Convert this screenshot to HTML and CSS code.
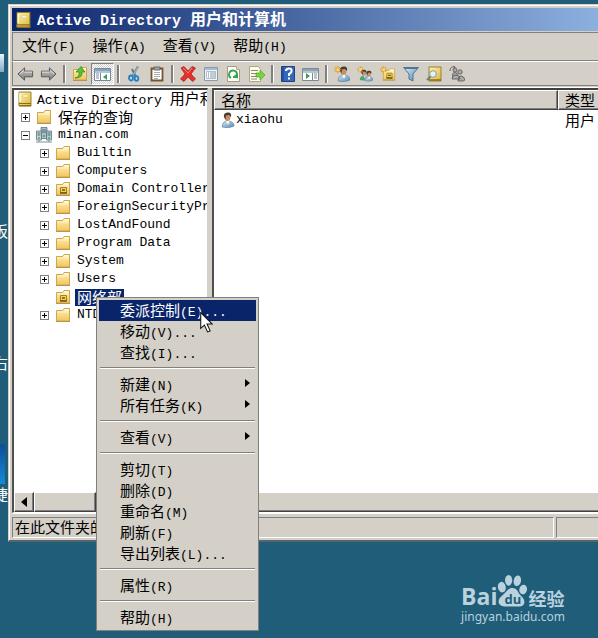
FILE: index.html
```html
<!DOCTYPE html>
<html lang="zh-CN">
<head>
<meta charset="utf-8">
<title>Active Directory 用户和计算机</title>
<link rel="stylesheet" href="styles.css">
</head>
<body>
<svg class="defs" aria-hidden="true">
  <defs>
    <linearGradient id="gold" x2="1" y2="1"><stop offset="0" stop-color="#fdf3b4"/><stop offset="1" stop-color="#dcb63c"/></linearGradient>
    <linearGradient id="fold" x2="0" y2="1"><stop offset="0" stop-color="#fff0b4"/><stop offset="1" stop-color="#f0c55e"/></linearGradient>
    <linearGradient id="steel" x2="0" y2="1"><stop offset="0" stop-color="#c8c8c8"/><stop offset="1" stop-color="#7c7c7c"/></linearGradient>
    <linearGradient id="blue" x2="1" y2="1"><stop offset="0" stop-color="#dcecf8"/><stop offset="1" stop-color="#4f86b4"/></linearGradient>
  </defs>
  <symbol id="book" viewBox="0 0 16 16"><path d="M2 1h12v14H3q-2 0-1-3z" fill="url(#gold)" stroke="#9b8128"/><path d="M2 12.5h12M2 14.6h12" stroke="#8c6c14" stroke-width="1.2"/><path d="M3 2v9" stroke="#fff8cf" stroke-width="1.5"/><path d="M6 4h5v2H6z" fill="#fffbe0" stroke="#d8c06b" stroke-width=".5"/></symbol>
  <symbol id="folder" viewBox="0 0 16 16"><path d="M1.500 3.500h6l1.500-2h5.500v12.500h-13z" fill="url(#fold)" stroke="#d0a64c"/><path d="M9.500 3h4" stroke="#fffbe4" stroke-width="1.500"/><path d="M2 5h12" stroke="#fff5cb"/><path d="M1 14.500h14" stroke="#b99349"/></symbol>
  <symbol id="ou" viewBox="0 0 16 16"><use href="#folder"/><path d="M5.500 6.500h6v5h-6z" fill="#f0d45c" stroke="#a08020"/><path d="M5 12h7M7 9h3" stroke="#6e5713" stroke-width="1.500"/></symbol>
  <symbol id="domain" viewBox="0 0 16 16"><g stroke="#5d747e" stroke-width=".8"><path d="M5 .5h6v11H5z" fill="#a9bdc6"/><path d="M.5 4h5v9h-5z" fill="#c6d5dc"/><path d="M10.500 4h5v9h-5z" fill="#b7c8d0"/></g><path d="M6 3h4M6 5h4M1.500 6h3M1.500 8h3M11.500 6h3M11.500 8h3" stroke="#536c79"/><path d="M7 9h2M2 11h2M12 11h2" stroke="#40b44a" stroke-width="1.500"/><path d="M0 15h16M3 13v2M13 13v2" stroke="#7b929b"/></symbol>
  <symbol id="user" viewBox="0 0 16 16"><path d="M3 15q0-5 4-6h3q5 1 5 5-5 3-12 1z" fill="url(#blue)" stroke="#587b99" stroke-width=".6"/><path d="m7 9 2 4 1.500-4z" fill="#fff"/><ellipse cx="8.500" cy="5" rx="3" ry="4" fill="#c79269"/><path d="M5 5Q4 1 8.500.5T12 5l-2-2-3 .5-.5 4z" fill="#4b3d33"/></symbol>
  <symbol id="spark" viewBox="0 0 16 16"><path d="M4.500 0v9M0 4.500h9M1.500 1.500l6 6M7.500 1.500l-6 6" stroke="#e79b28" stroke-width="1.300"/><circle cx="4.500" cy="4.500" r="1.700" fill="#ffe17c"/></symbol>
  <symbol id="back" viewBox="0 0 18 16"><path d="M1 8 8 1.500V5h8.500v6H8v3.500z" fill="url(#steel)" stroke="#555"/><path d="M3 8 7 4.500M8 6h8" stroke="#e5e5e5" fill="none"/></symbol>
  <symbol id="up" viewBox="0 0 16 16"><use href="#folder"/><path d="M3 12q5-1 4-6H4l5-5.500L13 6h-3q1 6-7 6z" fill="#5bc12f" stroke="#2c8a20" stroke-width=".7"/></symbol>
  <symbol id="panes" viewBox="0 0 17 16"><path d="M.5 2.500h16v12H.5z" fill="#fff" stroke="#7489a1"/><path d="M1 4h15" stroke="#87a3c8" stroke-width="2"/><path d="M1 6h15M6.500 7v7" stroke="#7489a1"/><path d="M2 8h3M2 10h3M2 12h3" stroke="#758ca8"/></symbol>
  <symbol id="cut" viewBox="0 0 16 16"><path d="M12 .5 6.500 10M6 3l4 8" stroke="#60788b" stroke-width="2"/><path d="m12 1-5 8" stroke="#d3e3ec" stroke-width=".7"/><ellipse cx="5" cy="12" rx="2" ry="2.500" fill="none" stroke="#2581c7" stroke-width="1.800"/><ellipse cx="10.500" cy="12.500" rx="1.800" ry="2.300" fill="none" stroke="#2581c7" stroke-width="1.800"/></symbol>
  <symbol id="clip" viewBox="0 0 16 16"><path d="M2.500 2.500h11v12h-11z" fill="#fff" stroke="#765330" stroke-width="1.800"/><path d="M5 1h6v3H5z" fill="#a6a6a6" stroke="#555" stroke-width=".8"/><path d="M5 6.500h6M5 8.500h6M5 10.500h6M5 12.500h4" stroke="#aaa"/></symbol>
  <symbol id="delete" viewBox="0 0 16 16"><path d="m1 2 3-1.500L8 5l4-4.500L15.500 2 11 8l4.500 5-3 2.500L8 11l-4 4.500L.5 13 5 8z" fill="#e5312c" stroke="#a51a1a" stroke-width=".7"/><path d="m3 2 5 5 4-5" fill="none" stroke="#f98074"/></symbol>
  <symbol id="props" viewBox="0 0 16 16"><path d="M1.500 1.500h13v13h-13z" fill="#eef5fa" stroke="#8b9aaa"/><path d="M2 3h12" stroke="#a5bdd6" stroke-width="2"/><path d="M3.500 5.500h9v7h-9z" fill="#fff" stroke="#b3bdc7"/><path d="M5 7h1M5 9h1M5 11h1" stroke="#4c86b3"/><path d="M7 7h5M7 9h5M7 11h5" stroke="#8798a8"/></symbol>
  <symbol id="sheet" viewBox="0 0 16 16"><path d="M1.500.5h9l3 3v12h-12z" fill="#fffffa" stroke="#a49b82"/><path d="M10.500.5v3h3" fill="#eee4c5" stroke="#b8aa84"/></symbol>
  <symbol id="refresh" viewBox="0 0 16 16"><use href="#sheet"/><path d="M5 12A4 4 0 1 1 11 9M11 11H7" fill="none" stroke="#35a252" stroke-width="1.800"/><path d="m8 9 4-1v5z" fill="#35a252"/></symbol>
  <symbol id="export" viewBox="0 0 16 16"><path d="M.5.5h9l2 3v12H.5z" fill="#fffdeb" stroke="#b2a67f"/><path d="M2 4.500h7M2 7.500h5M2 10.500h5M2 13h6" stroke="#8d866f"/><path d="M7 7h4V4l5 5-5 5v-3H7z" fill="#79d43d" stroke="#45a226" stroke-width=".7"/></symbol>
  <symbol id="help" viewBox="0 0 16 16"><path d="M1.500.5h13v15h-13z" fill="#3468bd" stroke="#263e85"/><path d="M3 1v14" stroke="#2448a0" stroke-width="1.500"/><path d="M6 5q0-2.500 3-2.500T11.500 5q0 2-2.500 3v2M9 11.500v2" fill="none" stroke="#fff" stroke-width="2"/></symbol>
  <symbol id="group" viewBox="0 0 16 16"><use href="#user" x="1" y="3" width="11" height="12"/><use href="#user" x="6" y="4" width="11" height="12"/><path d="M3 14q0-4 4-4l1 4z" fill="#4ca65b"/></symbol>
  <symbol id="filter" viewBox="0 0 16 16"><path d="M.5 1.500h15L10 8v7l-4-2V8z" fill="url(#blue)" stroke="#4f7791"/><path d="M2 2.500h12" stroke="#4f7791"/></symbol>
  <symbol id="find" viewBox="0 0 16 16"><path d="M3 1h12v14H3z" fill="url(#gold)" stroke="#9b8128"/><path d="M3 14h12" stroke="#8c6c14" stroke-width="1.500"/><path d="M5 10 1 14" stroke="#697e87" stroke-width="2"/><circle cx="7" cy="8" r="3.300" fill="#e4f3f9" stroke="#8a9b9d"/></symbol>
  <symbol id="addgroup" viewBox="0 0 16 16"><path d="M1 5q0-5 5-4M4 0l2 1-1 3" fill="none" stroke="#666"/><g fill="#aaa" stroke="#555" stroke-width=".8"><circle cx="6" cy="4" r="2"/><circle cx="11" cy="6" r="2.200"/><circle cx="6" cy="9" r="2.500"/><path d="M3 13q0-4 4-4t4 4zM9 15q0-5 3-5t4 4l-2 1z"/></g></symbol>
</svg>

<aside class="desk">
  <i class="scrap scrap-a"></i><span class="desk-a">板</span><span class="desk-b">右</span>
  <i class="scrap scrap-b"></i><span class="desk-c">捷</span>
</aside>

<main class="window">
  <header class="title"><svg><use href="#book"/></svg><h1><span class="lat">Active Directory </span>用户和计算机</h1></header>
  <nav class="menubar">
    <button>文件<span class="lat">(F)</span></button>
    <button>操作<span class="lat">(A)</span></button>
    <button>查看<span class="lat">(V)</span></button>
    <button>帮助<span class="lat">(H)</span></button>
  </nav>
  <div class="toolbar">
    <button aria-label="后退"><svg class="wide"><use href="#back"/></svg></button>
    <button aria-label="前进"><svg class="wide flip"><use href="#back"/></svg></button>
    <i class="sep"></i>
    <button aria-label="向上"><svg><use href="#up"/></svg></button>
    <button class="pressed" aria-label="显示控制台树"><svg class="wide" viewBox="0 0 17 16"><use href="#panes"/><path d="m13 8-4 3 4 3z" fill="#35a252"/></svg></button>
    <i class="sep"></i>
    <button aria-label="剪切"><svg><use href="#cut"/></svg></button>
    <button aria-label="复制"><svg><use href="#clip"/></svg></button>
    <i class="sep"></i>
    <button aria-label="删除"><svg><use href="#delete"/></svg></button>
    <button aria-label="属性"><svg><use href="#props"/></svg></button>
    <button aria-label="刷新"><svg><use href="#refresh"/></svg></button>
    <button aria-label="导出列表"><svg><use href="#export"/></svg></button>
    <i class="sep"></i>
    <button aria-label="帮助"><svg><use href="#help"/></svg></button>
    <button aria-label="操作窗格"><svg class="wide" viewBox="0 0 17 16"><path d="M.5 2.500h16v12H.5z" fill="#fff" stroke="#7b8994"/><path d="M1 4h15" stroke="#8ea3b6" stroke-width="2"/><path d="M1 6h15M10.500 7v7" stroke="#7b8994"/><path d="M12 8h3M12 10h3M12 12h3" stroke="#7b8994"/><path d="m4 7 4 3-4 3z" fill="#35a252"/></svg></button>
    <i class="sep"></i>
    <button aria-label="新建用户"><svg viewBox="0 0 16 16"><use href="#user" x="1" width="16" height="16"/><use href="#spark" width="13" height="13"/></svg></button>
    <button aria-label="新建组"><svg viewBox="0 0 16 16"><use href="#group"/><use href="#spark" width="12" height="12"/></svg></button>
    <button aria-label="新建组织单位"><svg viewBox="0 0 16 16"><use href="#ou" x="2" y="1" width="14" height="15"/><use href="#spark" width="13" height="13"/></svg></button>
    <button aria-label="筛选"><svg><use href="#filter"/></svg></button>
    <button aria-label="查找"><svg><use href="#find"/></svg></button>
    <button aria-label="添加到组"><svg><use href="#addgroup"/></svg></button>
  </div>

  <div class="panes">
    <section class="pane tree-pane">
      <ul class="tree">
        <li class="root"><svg><use href="#book"/></svg><span class="label"><span class="lat">Active Directory </span>用户和计算机</span></li>
        <li class="one"><button class="box" aria-label="展开"></button><svg><use href="#folder"/></svg><span class="label">保存的查询</span></li>
        <li class="one"><button class="box open" aria-label="折叠"></button><svg><use href="#domain"/></svg><span class="label lat">minan.com</span></li>
        <li class="two"><button class="box" aria-label="展开"></button><svg><use href="#folder"/></svg><span class="label lat">Builtin</span></li>
        <li class="two"><button class="box" aria-label="展开"></button><svg><use href="#folder"/></svg><span class="label lat">Computers</span></li>
        <li class="two"><button class="box" aria-label="展开"></button><svg><use href="#ou"/></svg><span class="label lat">Domain Controllers</span></li>
        <li class="two"><button class="box" aria-label="展开"></button><svg><use href="#folder"/></svg><span class="label lat">ForeignSecurityPrincipals</span></li>
        <li class="two"><button class="box" aria-label="展开"></button><svg><use href="#folder"/></svg><span class="label lat">LostAndFound</span></li>
        <li class="two"><button class="box" aria-label="展开"></button><svg><use href="#folder"/></svg><span class="label lat">Program Data</span></li>
        <li class="two"><button class="box" aria-label="展开"></button><svg><use href="#folder"/></svg><span class="label lat">System</span></li>
        <li class="two"><button class="box" aria-label="展开"></button><svg><use href="#folder"/></svg><span class="label lat">Users</span></li>
        <li class="two"><i class="nobox"></i><svg><use href="#ou"/></svg><span class="label chosen">网络部</span></li>
        <li class="two"><button class="box" aria-label="展开"></button><svg><use href="#folder"/></svg><span class="label lat">NTDS Quotas</span></li>
      </ul>
      <div class="scroll"><button class="arrow" aria-label="向左滚动"><svg viewBox="0 0 6 10"><path d="M6 0v10L0 5z"/></svg></button><span class="thumb short"></span></div>
    </section>
    <section class="pane list-pane">
      <table>
        <thead><tr><th>名称</th><th class="kind">类型</th></tr></thead>
        <tbody><tr><td><div class="person"><svg><use href="#user"/></svg><span class="lat">xiaohu</span></div></td><td class="kind">用户</td></tr></tbody>
      </table>
      <div class="scroll"><span class="thumb"></span></div>
    </section>
  </div>
  <footer class="status"><span>在此文件夹的子树中</span><span class="end"></span></footer>
</main>

<div class="context" role="menu">
  <button class="active">委派控制<span class="lat">(E)...</span></button>
  <button>移动<span class="lat">(V)...</span></button>
  <button>查找<span class="lat">(I)...</span></button>
  <hr>
  <button class="more">新建<span class="lat">(N)</span></button>
  <button class="more">所有任务<span class="lat">(K)</span></button>
  <hr>
  <button class="more">查看<span class="lat">(V)</span></button>
  <hr>
  <button>剪切<span class="lat">(T)</span></button>
  <button>删除<span class="lat">(D)</span></button>
  <button>重命名<span class="lat">(M)</span></button>
  <button>刷新<span class="lat">(F)</span></button>
  <button>导出列表<span class="lat">(L)...</span></button>
  <hr>
  <button>属性<span class="lat">(R)</span></button>
  <hr>
  <button>帮助<span class="lat">(H)</span></button>
</div>
<svg class="pointer" viewBox="0 0 12 20"><path d="M.5.5v15l3.500-3 3 6.500 2.500-1-3-6.500h5z" fill="#fff" stroke="#111"/></svg>

<div class="brand">
  <div class="logo">
    <span class="bai">Bai</span>
    <span class="paw"><svg viewBox="0 0 32 34"><g fill="#b9d2de"><ellipse cx="5" cy="13" rx="4" ry="5.500" transform="rotate(-12 5 13)"/><ellipse cx="12" cy="6" rx="3.700" ry="5.500"/><ellipse cx="21" cy="6.500" rx="3.800" ry="5.500" transform="rotate(12 21 6.500)"/><ellipse cx="27" cy="15.500" rx="4" ry="5" transform="rotate(12 27 15.500)"/><path d="M16 14c-5 0-6 4-10 7-4 3-5 6-4 9 2 4 8 3 14 3s11 1 12-3c1-4-1-6-4-9-3-3-3-7-8-7z"/></g></svg><b>du</b></span>
    <span class="jy">经验</span>
  </div>
  <div class="site">jingyan.baidu.com</div>
</div>
</body>
</html>
```
FILE: styles.css
```css
* { box-sizing: border-box; }
body {
  margin: 0;
  height: 100vh;
  display: flex;
  position: relative;
  overflow: hidden;
  background: #1f5d79;
  color: #000;
  font: 15px/18px "Noto Sans CJK SC", sans-serif;
}
button { margin: 0; padding: 0; border: 0; background: none; color: inherit; font: inherit; white-space: nowrap; }
svg { display: block; flex: none; width: 16px; height: 16px; }
.defs { position: absolute; width: 0; height: 0; }
.lat { font-family: "Liberation Mono", monospace; font-size: 13px; white-space: pre; }

.desk { position: absolute; inset: 0 auto 0 0; width: 9px; overflow: hidden; color: #fff; }
.desk span { position: absolute; right: 1px; }
.desk-a { top: 222px; }
.desk-b { top: 354px; }
.desk-c { top: 485px; }
.scrap { position: absolute; left: 0; }
.scrap-a { top: 54px; width: 4px; height: 18px; background: linear-gradient(#e7f4fb, #83aac8); }
.scrap-b { top: 444px; width: 5px; height: 40px; background: linear-gradient(#0b4e9c, #168ad4); }

.window {
  flex: 1;
  min-width: 0;
  margin: 4px 0 96px 8px;
  padding: 3px 0 1px 3px;
  display: flex;
  flex-direction: column;
  background: #d4d0c8;
  border: 1px solid #d4d0c8;
  border-right: 0;
  border-bottom: 2px solid #56656b;
  box-shadow: inset 1px 1px #fff;
}
.title {
  height: 23px;
  padding-left: 3px;
  display: flex;
  align-items: center;
  gap: 5px;
  color: #fff;
  background: linear-gradient(90deg, #0a246a, #8cb0de);
}
.title svg { width: 17px; height: 20px; }
.title h1 { margin: 0; font-size: 16px; line-height: 22px; white-space: nowrap; }
.title .lat { font-size: 15px; }
.menubar {
  height: 29px;
  margin-top: 1px;
  padding: 0 9px;
  display: flex;
  align-items: center;
  gap: 17px;
  border-top: 1px solid #808080;
  border-bottom: 1px solid #808080;
  border-left: 1px solid #808080;
}
.toolbar {
  height: 25px;
  padding-left: 1px;
  display: flex;
  align-items: center;
  border: solid;
  border-width: 1px 0 1px 1px;
  border-color: #fff #808080 #808080;
}
.toolbar button { width: 23px; height: 22px; display: grid; place-items: center; }
.toolbar .wide { width: 17px; }
.flip { transform: scaleX(-1); }
.toolbar .pressed {
  border: 1px solid;
  border-color: #808080 #fff #fff #808080;
  background: repeating-conic-gradient(#fff 0 25%, #d4d0c8 0 50%) 0 0 / 2px 2px;
}
.sep { width: 8px; height: 18px; display: flex; justify-content: center; }
.sep::before { content: ""; width: 2px; background: #808080; border-right: 1px solid #fff; }

.panes {
  flex: 1;
  min-height: 0;
  margin-top: 1px;
  display: grid;
  grid-template-columns: 196px 1fr;
  gap: 4px;
  border-top: 1px solid #fff;
}
.pane {
  min-width: 0;
  display: flex;
  flex-direction: column;
  overflow: hidden;
  background: #fff;
  border: 1px solid #fff;
  border-top: 2px solid #404040;
  border-left: 2px solid #505050;
}
.tree-pane { border-right-color: #d4d0c8; }
.list-pane { border-right: 0; }
.tree { flex: 1; margin: 0; padding: 0; list-style: none; }
.tree li { height: 18px; display: flex; align-items: center; white-space: nowrap; }
.tree .root { padding-left: 3px; gap: 4px; }
.tree .one { padding-left: 7px; gap: 6px; }
.tree .two { padding-left: 26px; gap: 6px; }
.box, .nobox { flex: none; width: 9px; height: 9px; }
.box {
  border: 1px solid #808080;
  background:
    linear-gradient(#000, #000) center / 5px 1px no-repeat,
    linear-gradient(#000, #000) center / 1px 5px no-repeat;
}
.box.open { background: linear-gradient(#000, #000) center / 5px 1px no-repeat; }
.label { line-height: 18px; }
.tree .chosen { height: 17px; padding: 0 2px; margin-left: -2px; line-height: 16px; background: #0a246a; color: #fff; }

.scroll {
  height: 20px;
  display: flex;
  background: repeating-conic-gradient(#fff 0 25%, #d4d0c8 0 50%) 0 0 / 2px 2px;
}
.arrow, .thumb { background: #d4d0c8; border: 1px solid; border-color: #fff #404040 #404040 #fff; box-shadow: inset -1px -1px #808080; }
.arrow { width: 20px; display: grid; place-items: center; }
.arrow svg { width: 6px; height: 10px; }
.thumb { flex: 1; }
.list-pane .thumb { border-right: 0; box-shadow: inset 0 -1px #808080; }
.short { flex: 0 0 62px; }

.list-pane table { width: 100%; border-collapse: separate; border-spacing: 0; table-layout: fixed; }
.list-pane thead { background: #d4d0c8; }
.list-pane th {
  height: 20px;
  padding: 0 0 0 6px;
  font-weight: 400;
  text-align: left;
  border: 1px solid;
  border-color: #fff #404040 #404040 #fff;
  box-shadow: inset -1px -1px #808080;
}
.list-pane .kind { width: 40px; padding: 0 0 0 6px; border-right: 0; white-space: nowrap; }
.list-pane th.kind { box-shadow: inset 0 -1px #808080; }
.list-pane td { height: 20px; padding: 0 0 0 5px; }
.list-pane td.kind { padding-left: 7px; }
.person { display: flex; align-items: center; gap: 1px; }
.list-pane table + .scroll { margin-top: auto; }

.status { height: 26px; padding: 3px 0 1px; display: flex; gap: 2px; border-top: 1px solid #fff; }
.status span {
  flex: 1;
  padding-left: 2px;
  border: 1px solid;
  border-color: #808080 #fff #fff #808080;
  white-space: nowrap;
  overflow: hidden;
}
.status .end { flex: 0 0 42px; border-right: 0; }

.context {
  position: absolute;
  left: 96px;
  top: 297px;
  width: 163px;
  padding: 2px;
  display: flex;
  flex-direction: column;
  background: #d4d0c8;
  border: 1px solid #808080;
}
.context button { height: 21px; padding-left: 21px; line-height: 20px; text-align: left; position: relative; }
.context .active { background: #0a246a; color: #fff; }
.context .more::after {
  content: "";
  position: absolute;
  right: 6px;
  top: 5px;
  border: 4px solid transparent;
  border-left: 5px solid #000;
  border-right: 0;
}
.context hr { height: 2px; margin: 4px 1px 5px; border: 0; border-top: 1px solid #808080; border-bottom: 1px solid #fff; }
.pointer { position: absolute; left: 200px; top: 312px; width: 13px; height: 21px; }

.brand { position: absolute; right: 33px; bottom: 12px; color: #b9d2de; }
.logo { height: 34px; display: flex; align-items: flex-end; }
.bai { font: 700 23px/24px "Open Sans", sans-serif; }
.paw { position: relative; width: 31px; }
.paw svg { width: 31px; height: 34px; }
.paw b { position: absolute; left: 7px; bottom: 1px; color: #1f5d79; font: 700 13px/16px "Open Sans", sans-serif; }
.jy { font-size: 18px; font-weight: 700; line-height: 20px; }
.site { font: 12px/18px "Noto Sans", sans-serif; }
```
